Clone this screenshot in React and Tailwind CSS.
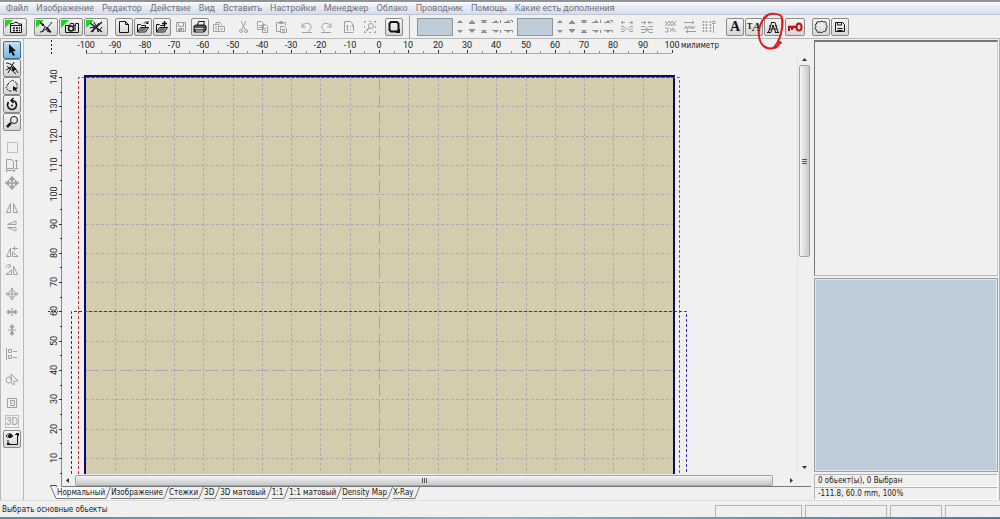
import React, { useState } from 'react'

const menus = ['Файл', 'Изображение', 'Редактор', 'Действие', 'Вид', 'Вставить', 'Настройки', 'Менеджер', 'Облако', 'Проводник', 'Помощь', 'Какие есть дополнения']
const views = ['Нормальный', 'Изображение', 'Стежки', '3D', '3D матовый', '1:1', '1:1 матовый', 'Density Map', 'X-Ray']

// workspace geometry: px per 10 mm, x of 0 mm and y of 140 mm
const STEP = 29.3
const ZERO_X = 379
const TOP_Y = 77
const xOf = n => Math.round(ZERO_X + n * STEP)
const yOf = n => Math.round(TOP_Y + (14 - n) * STEP)
const range = (a, b) => Array.from({ length: b - a + 1 }, (_, i) => a + i)

function Icon({ w = 14, h = 14, children, className = '' }) {
  return (
    <svg width={w} height={h} viewBox={`0 0 ${w} ${h}`} fill="none" stroke="currentColor" strokeWidth="1" className={`shrink-0 ${className}`} aria-hidden="true">
      {children}
    </svg>
  )
}

function Tool({ label, wide, off, active, children }) {
  const size = wide ? 'w-[24px]' : 'w-[18px]'
  const look = off
    ? 'border-transparent text-[#a0a0a0]'
    : active
      ? 'border-[#3c6f93] bg-linear-to-b from-[#c3e3f5] to-[#74b8de] text-[#101010]'
      : 'border-[#8a8a8a] bg-linear-to-b from-[#f6f6f6] to-[#d6d6d6] text-[#151515]'
  return (
    <button type="button" aria-label={label} title={label} disabled={off} className={`flex h-[18px] shrink-0 items-center justify-center rounded-xs border ${size} ${look}`}>
      {children}
    </button>
  )
}

const Corner = () => <path d="M0 0h8L0 8z" fill="#18d818" stroke="none" />

function Spinners() {
  return (
    <div className="flex gap-[3px] pl-[3px] text-[#8e8e8e]">
      {range(0, 4).map(i => (
        <button key={i} type="button" disabled aria-label={`Шаг ${i + 1}`} className="h-[17px] w-[9px]">
          <Icon w={9} h={17}>
            <path d="M1 5l3-3 3 3z" fill="currentColor" stroke="none" />
            <path d="M1 12l3 3 3-3z" fill="currentColor" stroke="none" />
            {i === 1 && <path d="M1 5.500h6M1 11.500h6" />}
            {i === 2 && <path d="M1 2.500h6M1 14.500h6" />}
            {i === 3 && <path d="M0 4.500h3M0 12.500h3M8.500 2v3M8.500 12v3" />}
            {i === 4 && <path d="M0 4.500h3M0 12.500h3M6 2.500h2.500v2M6 12.500h2.500v2" />}
          </Icon>
        </button>
      ))}
    </div>
  )
}

function Toolbar() {
  return (
    <div className="flex h-[24px] shrink-0 items-center border-b border-[#b9b9b9] pl-[3px]">
      <div className="flex pr-[7px]">
        <Tool label="Сетка" wide>
          <Icon w={20}><Corner /><path d="M5.500 12.500v-9h3l1-1h3l1 1.500h3v8.500zM5.500 5.500h11" /><path d="M8 8h7M8 10.500h7" strokeWidth="1.500" strokeDasharray="2 1" /></Icon>
        </Tool>
      </div>
      <div className="flex gap-px pr-[7px]">
        <Tool label="Векторы" wide>
          <Icon w={20}><Corner /><path d="M5 3l10 9M4 12c3 0 7-3 12-10M6 12l3-5M10 9l2 3" /><path d="M4 2l4 3-1 1zM11 7l4 5-2 0z" fill="currentColor" /></Icon>
        </Tool>
        <Tool label="Камера" wide>
          <Icon w={20}><Corner /><path d="M4.500 5.500h4l1-2h3v2h2v-2h3v9h-13z" /><circle cx="10" cy="8.500" r="2.500" strokeWidth="1.500" /><path d="M14 5v6" /></Icon>
        </Tool>
        <Tool label="Стежки изображения" wide>
          <Icon w={20}><Corner /><path d="M4 3l12 9M16 2L5 12" strokeWidth="1.500" /><path d="M8 2l2 4 3-3M4 8l4-1-1 5M11 8l1 4 4-5" /></Icon>
        </Tool>
      </div>
      <div className="flex gap-px">
        <Tool label="Новый"><Icon><path d="M2.500 1.500h6l3 3v8h-9zM8.500 1.500v3h3" /></Icon></Tool>
        <Tool label="Открыть"><Icon><path d="M1.500 12V4.500h3l1 1h4v2M1.500 12l3-4.500h8l-3 4.500z" /><path d="M3 11l2-3h6l-2 3z" fill="#777" stroke="none" /><path d="M8 3.500c1-2 3-2 4 0M12 1v2.500h-2" /></Icon></Tool>
        <Tool label="Объединить"><Icon><path d="M1.500 12V4.500h3l1 1h4v2M1.500 12l3-4.500h8l-3 4.500z" /><path d="M3 11l2-3h6l-2 3z" fill="#777" stroke="none" /><path d="M7 3.500h5M9.500 1v5" strokeWidth="1.500" /></Icon></Tool>
        <Tool label="Сохранить" off><Icon><path d="M2.500 2.500h9v9h-9zM4.500 2.500v4h5v-4M4.500 11.500v-3h5v3" /><path d="M5 9h3v2H5z" fill="currentColor" stroke="none" /></Icon></Tool>
        <Tool label="Печать"><Icon><path d="M4.500 5l1-3.500h6L10.500 5" /><path d="M1 6l2-1h9l1 1v4l-2 2H1z" fill="#555" /><path d="M2 8.500h8M3 11h7" stroke="#ddd" /></Icon></Tool>
        <Tool label="Экспорт" off><Icon><path d="M1.500 4.500h5v7h-5zM6.500 6.500h6v5h-6zM4 4.500v-2h4l2 3M3 7h2M3 9h2M8 9h3" /></Icon></Tool>
      </div>
      <div className="flex gap-px pl-[7px]">
        <Tool label="Вырезать" off><Icon><path d="M4 1l4 8M9 1L5 9" /><circle cx="4" cy="11" r="1.500" /><circle cx="9" cy="11" r="1.500" /></Icon></Tool>
        <Tool label="Копировать" off><Icon><path d="M1.500 1.500h4l2 2v6h-6zM6.500 4.500h3l2 2v6h-5zM3 5.500h3M3 7.500h3M8 8.500h2M8 10.500h2" /></Icon></Tool>
        <Tool label="Вставить" off><Icon><path d="M5.500 11.500h-4v-9h9v3M4 2.500l1-1h2l1 1v1H4zM5.500 6.500h4l2 2v4h-6zM7 9.500h3M7 11h3" /></Icon></Tool>
      </div>
      <div className="flex gap-px pl-[7px]">
        <Tool label="Отменить" off><Icon><path d="M2 3v4h4M2 7c2-5 9-5 9 0 0 2-1 3-3 4M2 12.500h10" /></Icon></Tool>
        <Tool label="Повторить" off><Icon><path d="M12 3v4H8M12 7c-2-5-9-5-9 0 0 2 1 3 3 4M2 12.500h10" /></Icon></Tool>
      </div>
      <div className="flex gap-[2px] pl-[6px]">
        <Tool label="Масштаб 1:1" off><Icon><path d="M1.500 12.500v-11h6l2 2v2M1.500 12.500h9M4.500 5v6M3 6.500l1.500-1M10.500 5v6M9 6.500l1.500-1M7.500 6v1M7.500 9v1" /></Icon></Tool>
        <Tool label="Показать всё" off><Icon><path d="M1 1.500h12M1 12.500h12M1.500 1v12M12.500 1v12" strokeDasharray="2 3" /><circle cx="8" cy="6" r="2.500" /><path d="M6 8l-3 3" strokeWidth="1.500" /></Icon></Tool>
      </div>
      <div className="flex border-r border-[#a0a0a0] py-[3px] pr-[6px] pl-[6px]">
        <Tool label="Пяльцы"><Icon><path d="M4 2h6l1.500 1.500V10L10 11.500H4L2.500 10V3.500z" strokeWidth="2" /><path d="M9 12h3V9" strokeWidth="2" /></Icon></Tool>
      </div>
      <div className="ml-[7px] h-[18px] w-[36px] border border-[#8f979e] bg-[#bfccda]" />
      <Spinners />
      <div className="ml-[4px] h-[18px] w-[36px] border border-[#8f979e] bg-[#bfccda]" />
      <Spinners />
      <div className="flex gap-[2px] pl-[5px]">
        <Tool label="Разгруппировать" off><Icon><path d="M1 2.500h4M9 2.500h4M3 1L1 2.500 3 4M11 1l2 1.500L11 4M1 6.500h3l2 2-2 3H1M13 6.500h-3l-2 2 2 3h3M1 9h3M10 9h3" /></Icon></Tool>
        <Tool label="Сгруппировать" off><Icon><path d="M1 2.500h5M8 2.500h5M4 1l2 1.500L4 4M10 1L8 2.500 10 4M1 6.500h4l2 2 2-2h4M1 12.500h4l2-3 2 3h4M1 9.500h12" /></Icon></Tool>
      </div>
      <div className="flex gap-px pl-[6px]">
        <Tool label="Порядок" off><Icon><path d="M1 1l4 5 3-5 4 5M1 6l4-5 3 5 4-5M1 8h3v4H1M6 12l3-4 3 4M6 8l4 4" /></Icon></Tool>
        <Tool label="Плотность" off><Icon><path d="M1 2.500h9M3 11.500h10M1 9l2-3 1 3 2-3 1 3 2-3 1 3 2-3M9 1l2 1.500L9 4M5 10l-2 1.500L5 13" /></Icon></Tool>
        <Tool label="Интервал" off><Icon><path d="M1.500 1v12M4.500 1v12M8.500 1v12" strokeWidth="1.500" strokeDasharray="2 1" /><path d="M11.500 5v8M10 1.500h3v2h-3" /></Icon></Tool>
      </div>
      <div className="flex gap-px pl-[8px] font-['Liberation_Serif',serif] leading-none font-bold">
        <Tool label="Текст"><span className="text-[14px]">A</span></Tool>
        <Tool label="Редактировать текст"><span className="text-[8px]">T</span><span className="text-[13px] italic">A</span></Tool>
        <div className="relative">
          <Tool label="Контур текста"><Icon><path d="M5 2.500h4L12 12M5.500 3L2.500 12M1 12.500h4M9 12.500h4M7 5l2.500 7M7 5L5 12" /><path d="M3 6h8M3 9h9" strokeDasharray="2 1" /></Icon></Tool>
          <svg width="28" height="38" viewBox="0 0 28 38" fill="none" stroke="#e01b1f" strokeWidth="2" strokeLinecap="round" className="pointer-events-none absolute -top-[6px] -left-[8px] z-10" aria-hidden="true">
            <path d="M8 6C13 0 25 1 26 6c2 7-2 25-9 30-7 2-13-3-14-12C2 17 5 8 11 4M18 36c3 0 5-3 6-6M22 30l3 1" />
          </svg>
        </div>
      </div>
      <div className="flex pl-[3px]">
        <button type="button" aria-label="Ключ" className="flex h-[18px] w-[20px] items-center justify-center rounded-xs border border-[#8a8a8a] bg-linear-to-b from-[#f6f6f6] to-[#d6d6d6] text-[#c01212]">
          <Icon w={18}><ellipse cx="13" cy="7" rx="2.500" ry="3.500" strokeWidth="2" /><path d="M2 7h9" strokeWidth="2.500" /><path d="M3 7v4M6 7v3" strokeWidth="2" /></Icon>
        </button>
      </div>
      <div className="flex gap-px pl-[7px]">
        <Tool label="Форма"><Icon><path d="M2.500 4C2 2 4 1 5.500 2 7 1 9 1 9.500 2c2-1 3.500 1 2.500 2.500C13.500 5.500 13 8 12 8.500c1 2-1 3.500-2.500 3-1 1.500-3 1-3.500.5-1.500 1-3.500 0-3-1.500C1 9.500.500 7.500 2 6.500 1 5.500 1 4 2.500 4z" /></Icon></Tool>
        <Tool label="Сохранить форму"><Icon><path d="M2.500 2.500h7l2 2v7h-9z" /><path d="M4.500 3v2h4V3M4.500 8.500h5M4.500 10.500h5" /></Icon></Tool>
      </div>
    </div>
  )
}

function SideTools() {
  return (
    <div className="flex w-[24px] shrink-0 flex-col items-center border-r border-l border-[#b9b9b9] pt-[2px]">
      <Tool label="Выбор" active><Icon><path d="M4 1v10l2-2 2 4 2-1-2-4h3z" fill="currentColor" stroke="none" /></Icon></Tool>
      <Tool label="Узлы"><Icon><path d="M1 2c5 0 9 4 12 10M2 5l9 8M9 1L3 12M1 9l5-3" /><path d="M7 6l4 2-3 2z" fill="currentColor" /></Icon></Tool>
      <Tool label="Лассо"><Icon><path d="M3 5l4-4 5 3v5M3 5L1 9l3 3h3" strokeDasharray="2 1" /><path d="M8 7v5l2-1 1 2 1-1-1-2h2z" fill="currentColor" stroke="none" /></Icon></Tool>
      <Tool label="Повернуть"><Icon><path d="M3.500 5C1 9 4 12.500 7 12.500S13 9 10.500 5C9.500 3.500 8 3.500 6 3.500M8.500 1L6 3.500 8.500 6" strokeWidth="1.500" /><circle cx="7" cy="8.500" r="1" fill="currentColor" stroke="none" /></Icon></Tool>
      <Tool label="Лупа"><Icon><circle cx="9" cy="5" r="3.500" /><path d="M6 8l-4 4" strokeWidth="2.500" /></Icon></Tool>
      <div className="flex flex-col items-center pt-[7px]">
        <Tool label="Рамка" off><Icon><path d="M2.500 2.500h10v10h-10z" opacity=".6" /></Icon></Tool>
        <Tool label="Размер" off><Icon><path d="M1.500 1.500h5l2 2v7h-7zM11.500 2v9M10 2.500h3M10 10.500h3M1 12.500h9M1.500 11v3M9.500 11v3" /></Icon></Tool>
        <Tool label="Переместить" off><Icon><path d="M7 2v10M2 7h10M5 3.500L7 1l2 2.500zM5 10.500L7 13l2-2.500zM3.500 5L1 7l2.500 2zM10.500 5L13 7l-2.500 2z" strokeWidth="1.500" /></Icon></Tool>
      </div>
      <div className="flex flex-col items-center pt-[7px]">
        <Tool label="Отразить по горизонтали" off><Icon><path d="M5.500 2.500v9h-4zM8.500 2.500v9h4z" /></Icon></Tool>
        <Tool label="Отразить по вертикали" off><Icon><path d="M11 5.500H2.500L11 2zM11 8.500H2.500L11 12z" /></Icon></Tool>
      </div>
      <div className="flex flex-col items-center pt-[8px]">
        <Tool label="Повернуть влево" off><Icon><path d="M5.500 3v8.500h-4zM7.500 7v4.500h5.500zM7 3.500h6M9.500 1v5" /></Icon></Tool>
        <Tool label="Повернуть вправо" off><Icon><path d="M8.500 3v8.500h4zM6.500 7v4.500h-5.500zM1 5c0-3 3-4 5-2M4 1l2 2-3 2" /></Icon></Tool>
      </div>
      <div className="flex flex-col items-center pt-[6px]">
        <Tool label="По центру" off><Icon><circle cx="7" cy="7" r="3.500" /><path d="M7 1v12M1 7h12M5.500 2.500L7 1l1.500 1.500M5.500 11.500L7 13l1.500-1.500M2.500 5.500L1 7l1.500 1.500M11.500 5.500L13 7l-1.500 1.500" /></Icon></Tool>
        <Tool label="По центру горизонтально" off><Icon><path d="M7 3v8M1 7h12" /><path d="M3 5v4l3-2zM11 5v4L8 7z" fill="currentColor" /></Icon></Tool>
        <Tool label="По центру вертикально" off><Icon><path d="M3 7h8M7 1v12" /><path d="M5 3h4L7 6zM5 11h4L7 8z" fill="currentColor" /></Icon></Tool>
      </div>
      <div className="flex flex-col items-center gap-[8px] pt-[6px]">
        <Tool label="Выровнять" off><Icon><path d="M1.500 1v12M3.500 2.500h3v3h-3zM3.500 8.500h3v3h-3zM8 4.500h4M8 10.500h4" /></Icon></Tool>
        <Tool label="Слияние" off><Icon><circle cx="4" cy="7" r="3" /><path d="M6 1l7 7H9v4L5 9M6 1v6" /></Icon></Tool>
      </div>
      <div className="flex flex-col items-center pt-[5px]">
        <Tool label="Спираль" off><Icon><path d="M2.500 2.500h9v9h-9zM5 9.500h4.500V4.500h-4v3h2" /></Icon></Tool>
        <Tool label="3D" off><span className="border border-[#c0c0c0] font-['Roboto',sans-serif] text-[10px] leading-[11px]">3D</span></Tool>
        <Tool label="Просмотр"><Icon><path d="M1 4c2-3 5-3 7 0-2 2-5 2-7 0zM3 8v4.500h9.500V3M10 2.500h3" /><circle cx="5" cy="4" r="1.500" fill="currentColor" /><path d="M2 12h3M11 2h3v2" strokeWidth="2" /></Icon></Tool>
      </div>
    </div>
  )
}

function TopRuler() {
  return (
    <svg width="735" height="16" viewBox="62 39 735 16" className="block font-['Liberation_Sans_Narrow','Roboto',sans-serif] text-[9px]" role="img" aria-label="Горизонтальная линейка">
      <path d={`M${xOf(-10)} 53.500H${xOf(10)}`} stroke="#a8a8a8" />
      {range(-10, 10).map(n => (
        <g key={n}>
          <path d={`M${xOf(n) + 0.5} 50v3`} stroke="#333" />
          {n < 10 && <path d={`M${xOf(n + 0.5) + 0.5} 51.500v1`} stroke="#333" />}
          <text x={xOf(n)} y="48" textAnchor="middle" fill="#222">{n * 10}</text>
        </g>
      ))}
      <text x="681" y="48" className="font-['DejaVu_Sans_Condensed','Roboto',sans-serif] text-[8px]" fill="#222">милиметр</text>
    </svg>
  )
}

function SideRuler() {
  return (
    <svg width="38" height="432" viewBox="24 55 38 432" className="block font-['Liberation_Sans_Narrow','Roboto',sans-serif] text-[9px]" role="img" aria-label="Вертикальная линейка">
      <path d="M61.500 77V487" stroke="#8a8a8a" />
      <path d="M48 311.500h10" stroke="#333" strokeDasharray="2 1" />
      {range(0, 14).map(n => (
        <g key={n}>
          <path d={`M59 ${yOf(n) + 0.5}h3`} stroke="#333" />
          {n > 0 && <path d={`M60 ${yOf(n - 0.5) + 0.5}h2`} stroke="#333" />}
          <text transform={`translate(57 ${yOf(n)}) rotate(-90)`} textAnchor="middle" fill="#222">{n * 10}</text>
        </g>
      ))}
    </svg>
  )
}

function Workspace() {
  return (
    <svg width="735" height="419" viewBox="62 55 735 419" fill="none" className="block" role="img" aria-label="Рабочее поле">
      <path d="M84 75H675V474H84z" fill="#d5ccad" />
      <g stroke="#b3a9b1" strokeDasharray="3 2">
        {range(-9, 9).filter(n => n !== 0).map(n => <path key={n} d={`M${xOf(n) + 0.5} 78V474`} />)}
        {range(1, 13).filter(n => n !== 4).map(n => <path key={n} d={`M86 ${yOf(n) + 0.5}H673`} />)}
      </g>
      <g stroke="#aaa3b0" strokeDasharray="13 4">
        <path d="M379.500 78V474M86 370.500H673" />
      </g>
      <path d="M85 474V76H674V474" stroke="#0a0a6e" strokeWidth="2" />
      <path d="M78.500 474V77.500H679.500V474" stroke="#c8323c" strokeDasharray="3 2" />
      <path d="M86 77.500H673" stroke="#76398c" strokeDasharray="3 2" />
      <path d="M71.500 474V311.500H686.500V474" stroke="#2c2cc8" strokeDasharray="3 2" />
    </svg>
  )
}

function ViewTabs() {
  const [view, setView] = useState(views[0])
  return (
    <div role="tablist" className="flex h-[13px] shrink-0 pl-[27px] text-[8px] leading-[12px] text-[#202020]">
      {views.map(v => (
        <button key={v} role="tab" aria-selected={view === v} onClick={() => setView(v)} className="flex shrink-0 whitespace-nowrap">
          {v === views[0] && <Icon w={6} h={12} className="text-[#777]"><path d="M0 0l5 11.500h1" /></Icon>}
          <span className={`h-[12px] border-b border-[#777] ${view === v ? 'bg-[#f9f9f9]' : ''}`}>{v}</span>
          <Icon w={6} h={12} className="text-[#777]"><path d="M0 11.500h1L5.500 0" /></Icon>
        </button>
      ))}
    </div>
  )
}

export default function App() {
  return (
    <div className="flex h-screen w-full flex-col overflow-hidden bg-[#f0f0f0] font-['DejaVu_Sans_Condensed','Roboto',sans-serif] text-[#202020]">
      <div className="h-[3px] shrink-0 border-b border-white bg-[#8f929b]" />
      <nav className="flex h-[12px] shrink-0 items-center gap-[8px] border-b border-[#c2c6d2] bg-linear-to-b from-[#f4f6fb] to-[#d6dcef] pl-[6px] font-['Roboto',sans-serif] text-[9px] leading-[11px] text-[#6e7078]">
        {menus.map(m => <button key={m} type="button" className="whitespace-nowrap">{m}</button>)}
      </nav>
      <Toolbar />

      <main className="flex min-h-0 flex-1">
        <SideTools />
        <section className="flex min-w-0 flex-1 flex-col">
          <div className="flex min-h-0 flex-1">
            <div className="w-[38px] shrink-0 overflow-hidden">
              <svg width="38" height="16" className="block" aria-hidden="true"><path d="M27.500 1v14" stroke="#222" strokeDasharray="2 2" /></svg>
              <SideRuler />
            </div>
            <div className="flex min-w-0 flex-1 flex-col">
              <div className="h-[16px] shrink-0 overflow-hidden"><TopRuler /></div>
              <div className="flex min-h-0 flex-1">
                <div className="min-w-0 flex-1 overflow-hidden"><Workspace /></div>
                <div className="flex w-[14px] shrink-0 flex-col items-center border-l border-[#e2e2e2]">
                  <Icon w={7} h={10} className="text-[#333]"><path d="M1 6l2.500-3L6 6z" fill="currentColor" stroke="none" /></Icon>
                  <div className="flex h-[192px] w-[11px] shrink-0 items-center justify-center rounded-xs border border-[#a2a2a2] bg-linear-to-r from-[#f5f5f5] to-[#c6c8cb]">
                    <Icon w={5} h={7} className="text-[#555]"><path d="M0 1.500h5M0 3.500h5M0 5.500h5" /></Icon>
                  </div>
                  <div className="flex-1" />
                  <Icon w={7} h={12} className="text-[#333]"><path d="M1 4l2.500 3L6 4z" fill="currentColor" stroke="none" /></Icon>
                </div>
              </div>
              <div className="flex h-[13px] shrink-0 items-center border-b border-[#777]">
                <Icon w={13} h={9} className="text-[#333]"><path d="M7 2v5L4 4.500z" fill="currentColor" stroke="none" /></Icon>
                <div className="flex h-[11px] min-w-0 flex-1 items-center justify-center rounded-xs border border-[#a2a2a2] bg-linear-to-b from-[#f5f5f5] to-[#c6c8cb]">
                  <Icon w={7} h={5} className="text-[#555]"><path d="M1.500 0v5M3.500 0v5M5.500 0v5" /></Icon>
                </div>
                <Icon w={38} h={9} className="text-[#333]"><path d="M17 2v5l3-2.500z" fill="currentColor" stroke="none" /></Icon>
              </div>
            </div>
          </div>
          <ViewTabs />
        </section>
        <aside className="flex w-[189px] shrink-0 flex-col border-r border-[#b0b0b0] pt-[1px] pr-[1px] pl-[3px] text-[8px] leading-[11px]">
          <div className="h-[236px] shrink-0 border-t-2 border-r border-b border-l border-t-[#777] border-r-[#ccc] border-b-[#bbb] border-l-[#777]" />
          <div className="mt-[2px] min-h-0 flex-1 border border-[#9a9fa4] bg-[#bfccda] outline outline-1 -outline-offset-2 outline-[#dfe6ec]" />
          <div className="mt-[2px] h-[13px] shrink-0 border border-[#b5b5b5] border-r-white border-b-white pl-[3px]">0 обьект(ы), 0 Выбран</div>
          <div className="h-[13px] shrink-0 border border-[#b5b5b5] border-r-white border-b-white pl-[3px]">-111.8, 60.0 mm, 100%</div>
        </aside>
      </main>

      <footer className="flex h-[17px] shrink-0 items-end gap-[3px] border-t border-[#dcdcdc] pl-[2px] text-[8px] leading-[14px]">
        <span className="flex-1">Выбрать основные обьекты</span>
        <div className="h-[12px] w-[87px] border-t border-r border-l border-[#b5b5b5]" />
        <div className="h-[12px] w-[82px] border-t border-r border-l border-[#b5b5b5]" />
        <div className="h-[12px] w-[52px] border-t border-r border-l border-[#b5b5b5]" />
        <div className="h-[12px] w-[55px] border-t border-l border-[#b5b5b5]" />
      </footer>
      <div className="h-[2px] shrink-0 bg-linear-to-r from-[#5d8c99] via-[#8fb0bd] to-[#5a7896]" />
    </div>
  )
}
